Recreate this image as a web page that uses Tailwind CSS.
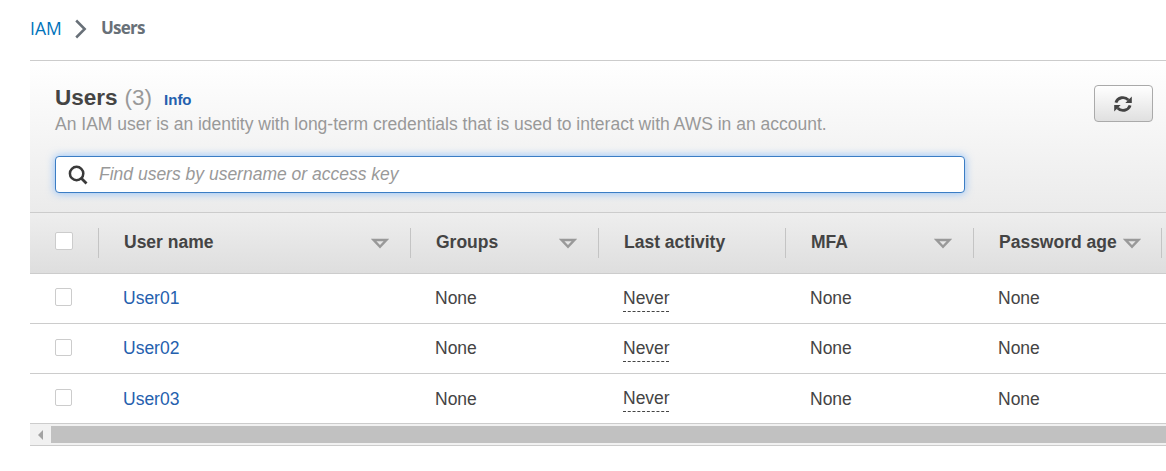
<!DOCTYPE html>
<html lang="en">
<head>
<meta charset="utf-8">
<title>IAM Users</title>
<script src="https://cdn.jsdelivr.net/npm/@tailwindcss/browser@4"></script>
</head>
<body class="h-[471px] overflow-hidden bg-white font-['Liberation_Sans',Arial,sans-serif] text-[17.5px] leading-[22px] text-[#444]">
<svg class="hidden"><symbol id="sort" viewBox="0 0 18 12"><path d="M2.6 2H15.4L9 8.8Z" fill="none" stroke="#999" stroke-width="2.5"/></symbol></svg>
<nav class="flex h-[60px] items-center pl-[30px] pb-1 font-['Open_Sans','Noto_Sans',sans-serif] text-[17px]">
  <a class="w-[31px] whitespace-nowrap text-[17.5px] text-[#0073bb]">IAM</a>
  <svg class="ml-[14px] mt-[2px] h-5 w-3" viewBox="0 0 12 20" fill="none" stroke="#687078" stroke-width="2.5"><path d="M1.2 1.5L9.7 10L1.2 18.5"/></svg>
  <span class="ml-[14px] font-bold tracking-[-0.75px] text-[#687078]">Users</span>
</nav>
<main class="ml-[30px] border-t border-[#ccc]">
  <header class="h-[151px] bg-linear-to-b from-white to-[#ebebeb] pl-[25px] pt-6">
    <div class="flex justify-between pr-[13px]">
      <div class="h-[71px]">
        <h1 class="flex h-[26px] items-baseline text-[22.5px] leading-[26px]"><b>Users</b><span class="ml-[7px] text-[#999]">(3)</span><a class="ml-3 text-[15px] font-bold text-[#2460ae]">Info</a></h1>
        <p class="mt-[2px] whitespace-nowrap text-[#999]">An IAM user is an identity with long-term credentials that is used to interact with AWS in an account.</p>
      </div>
      <button class="flex h-[37px] w-[59px] items-center justify-center rounded-[4px] border border-[#aaa] bg-linear-to-b from-white to-[#e0e0e0]">
        <svg class="mr-[2px] h-[18px] w-[18px]" viewBox="0 0 18 18" fill="none" stroke="#444" stroke-width="2.9"><path d="M1.900 7.600C3.600 2.200 10.600 1 14.400 5"/><path d="M16.100 10.400C14.400 15.800 7.400 17 3.600 13"/><path d="M17.800 1.600V8.100H11.300ZM.2 16.400V9.900H6.700Z" fill="#444" stroke="none"/></svg>
      </button>
    </div>
    <div class="flex h-[37px] w-[910px] items-center rounded-[4px] border border-[#3b7dc4] bg-white pl-3 shadow-[0_0_9px_rgba(80,160,255,0.65)]">
      <svg class="mt-px h-5 w-5" viewBox="0 0 20 20" fill="none" stroke="#3a3a3a"><circle cx="8.600" cy="8.500" r="6.700" stroke-width="2.500"/><path d="M13.300 13.300L18.500 18.400" stroke-width="2.800"/></svg>
      <span class="ml-[11px] pb-px italic text-[#999]">Find users by username or access key</span>
    </div>
  </header>
  <section class="w-[1136px] overflow-hidden">
    <div class="grid h-[62px] grid-cols-[69px_312px_188px_187px_188px_192px] items-center border-y border-[#ccc] bg-linear-to-b from-[#eee] to-[#dedede] font-bold">
      <div class="flex h-[30px] items-center border-r border-[#c4c4c4] pb-[5px] pl-[25px]"><span class="h-[18px] w-[18px] rounded-[2px] border border-[#ccc] bg-white"></span></div>
      <div class="flex h-[30px] items-center justify-between border-r border-[#c4c4c4] pb-[3px] pl-[25px] pr-[21px]">User name<svg class="mt-1 h-3 w-[18px]"><use href="#sort"/></svg></div>
      <div class="flex h-[30px] items-center justify-between border-r border-[#c4c4c4] pb-[3px] pl-[25px] pr-[21px]">Groups<svg class="mt-1 h-3 w-[18px]"><use href="#sort"/></svg></div>
      <div class="flex h-[30px] items-center border-r border-[#c4c4c4] pb-[3px] pl-[25px]">Last activity</div>
      <div class="flex h-[30px] items-center justify-between border-r border-[#c4c4c4] pb-[3px] pl-[25px] pr-[21px]">MFA<svg class="mt-1 h-3 w-[18px]"><use href="#sort"/></svg></div>
      <div class="flex h-[30px] items-center pl-[25px]"><span class="w-[124px] whitespace-nowrap pb-[3px]">Password age</span><svg class="mt-px h-3 w-[18px] shrink-0"><use href="#sort"/></svg><span class="ml-5 h-[30px] w-px shrink-0 bg-[#c4c4c4]"></span></div>
    </div>
    <div class="grid h-[50px] grid-cols-[93px_312px_188px_187px_188px_168px] items-center border-b border-[#ccc]">
      <span class="mb-[3px] ml-[25px] h-[18px] w-[17px] rounded-[2px] border border-[#ccc]"></span><a class="pb-[2px] text-[#2460ae]">User01</a><span class="pb-[2px]">None</span><span class="mt-[2px] h-[25px] w-[46px] border-b border-dashed border-[#444]">Never</span><span class="pb-[2px]">None</span><span class="pb-[2px]">None</span>
    </div>
    <div class="grid h-[50px] grid-cols-[93px_312px_188px_187px_188px_168px] items-center border-b border-[#ccc]">
      <span class="mb-[2px] ml-[25px] h-[17px] w-[17px] rounded-[2px] border border-[#ccc]"></span><a class="pb-[2px] text-[#2460ae]">User02</a><span class="pb-[2px]">None</span><span class="mt-[2px] h-[25px] w-[46px] border-b border-dashed border-[#444]">Never</span><span class="pb-[2px]">None</span><span class="pb-[2px]">None</span>
    </div>
    <div class="grid h-[50px] grid-cols-[93px_312px_188px_187px_188px_168px] items-center border-b border-[#ccc]">
      <span class="mb-[2px] ml-[25px] h-[17px] w-[17px] rounded-[2px] border border-[#ccc]"></span><a class="text-[#2460ae]">User03</a><span>None</span><span class="mt-[2px] h-[25px] w-[46px] border-b border-dashed border-[#444]">Never</span><span>None</span><span>None</span>
    </div>
    <div class="flex h-[22px] items-center border-b border-[#ccc] bg-[#f1f1f1]">
      <svg class="ml-2 h-[10px] w-[5px]" viewBox="0 0 5 10" fill="#a3a3a3"><path d="M5 0V10L0 5Z"/></svg>
      <span class="ml-2 h-[17px] grow bg-[#c1c1c1]"></span>
    </div>
  </section>
</main>
</body>
</html>
